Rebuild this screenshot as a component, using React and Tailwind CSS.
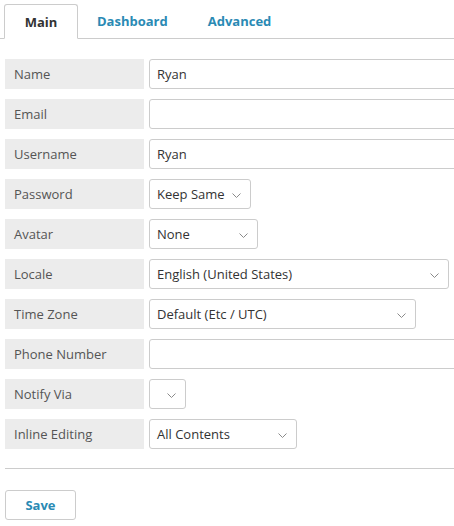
const rows = [
  { label: "Name", type: "input", value: "Ryan" },
  { label: "Email", type: "input", value: "" },
  { label: "Username", type: "input", value: "Ryan" },
  { label: "Password", type: "select", value: "Keep Same", width: "w-[102px]" },
  { label: "Avatar", type: "select", value: "None", width: "w-[109px]" },
  { label: "Locale", type: "select", value: "English (United States)", width: "w-[300px]" },
  { label: "Time Zone", type: "select", value: "Default (Etc / UTC)", width: "w-[267px]" },
  { label: "Phone Number", type: "input", value: "" },
  { label: "Notify Via", type: "select", value: "", width: "w-[37px]" },
  { label: "Inline Editing", type: "select", value: "All Contents", width: "w-[148px]" },
];

function Chevron() {
  return (
    <svg width="9" height="5" viewBox="0 0 9 5" className="shrink-0 mt-[2px]">
      <path d="M0.5 0.5 L4.5 4.5 L8.5 0.5" stroke="#8a8a8a" strokeWidth="1" fill="none" />
    </svg>
  );
}

function Field({ row }) {
  if (row.type === "input") {
    return (
      <div className="h-[30px] w-[340px] shrink-0 border border-[#cccccc] rounded-[3px] bg-white flex items-center pl-[7px] pt-[2px] text-[13px] text-[#333]">
        {row.value}
      </div>
    );
  }
  return (
    <div
      className={`h-[30px] ${row.width} shrink-0 border border-[#cccccc] rounded-[3px] bg-white flex items-center justify-between pl-[7px] pr-[9px] text-[13px] text-[#333]`}
    >
      <span className="whitespace-nowrap pt-[2px]">{row.value}</span>
      <Chevron />
    </div>
  );
}

export default function App() {
  return (
    <div
      className="w-[454px] h-[526px] overflow-hidden bg-white"
      style={{ fontFamily: '"Open Sans", sans-serif' }}
    >
      {/* Tabs */}
      <div className="flex items-end h-[39px] pl-[4px] pt-[4px] border-b border-[#cccccc] w-[600px]">
        <div className="h-[35px] w-[74px] -mb-px border border-[#cccccc] border-b-white rounded-t-[3px] bg-white flex items-center justify-center pt-[2px] text-[13px] font-bold text-[#333]">
          Main
        </div>
        <div className="h-[35px] flex items-center pt-[2px] ml-[19px] text-[13px] font-bold text-[#2a8ab4]">
          Dashboard
        </div>
        <div className="h-[35px] flex items-center pt-[2px] ml-[40px] text-[13px] font-bold text-[#2a8ab4]">
          Advanced
        </div>
      </div>

      {/* Form */}
      <div className="pl-[5px] pt-[20px] flex flex-col gap-[10px]">
        {rows.map((row) => (
          <div key={row.label} className="flex items-center gap-[5px]">
            <div className="h-[30px] w-[139px] shrink-0 bg-[#ececec] flex items-center pl-[9px] pt-[2px] text-[13px] text-[#555]">
              {row.label}
            </div>
            <Field row={row} />
          </div>
        ))}
      </div>

      <div className="ml-[5px] mt-[19px] border-t border-[#cccccc] w-[600px]" />

      <div className="pl-[5px] pt-[21px]">
        <button className="h-[30px] w-[71px] border border-[#cccccc] rounded-[3px] bg-white pt-[2px] text-[13px] font-bold text-[#2a8ab4]">
          Save
        </button>
      </div>
    </div>
  );
}
